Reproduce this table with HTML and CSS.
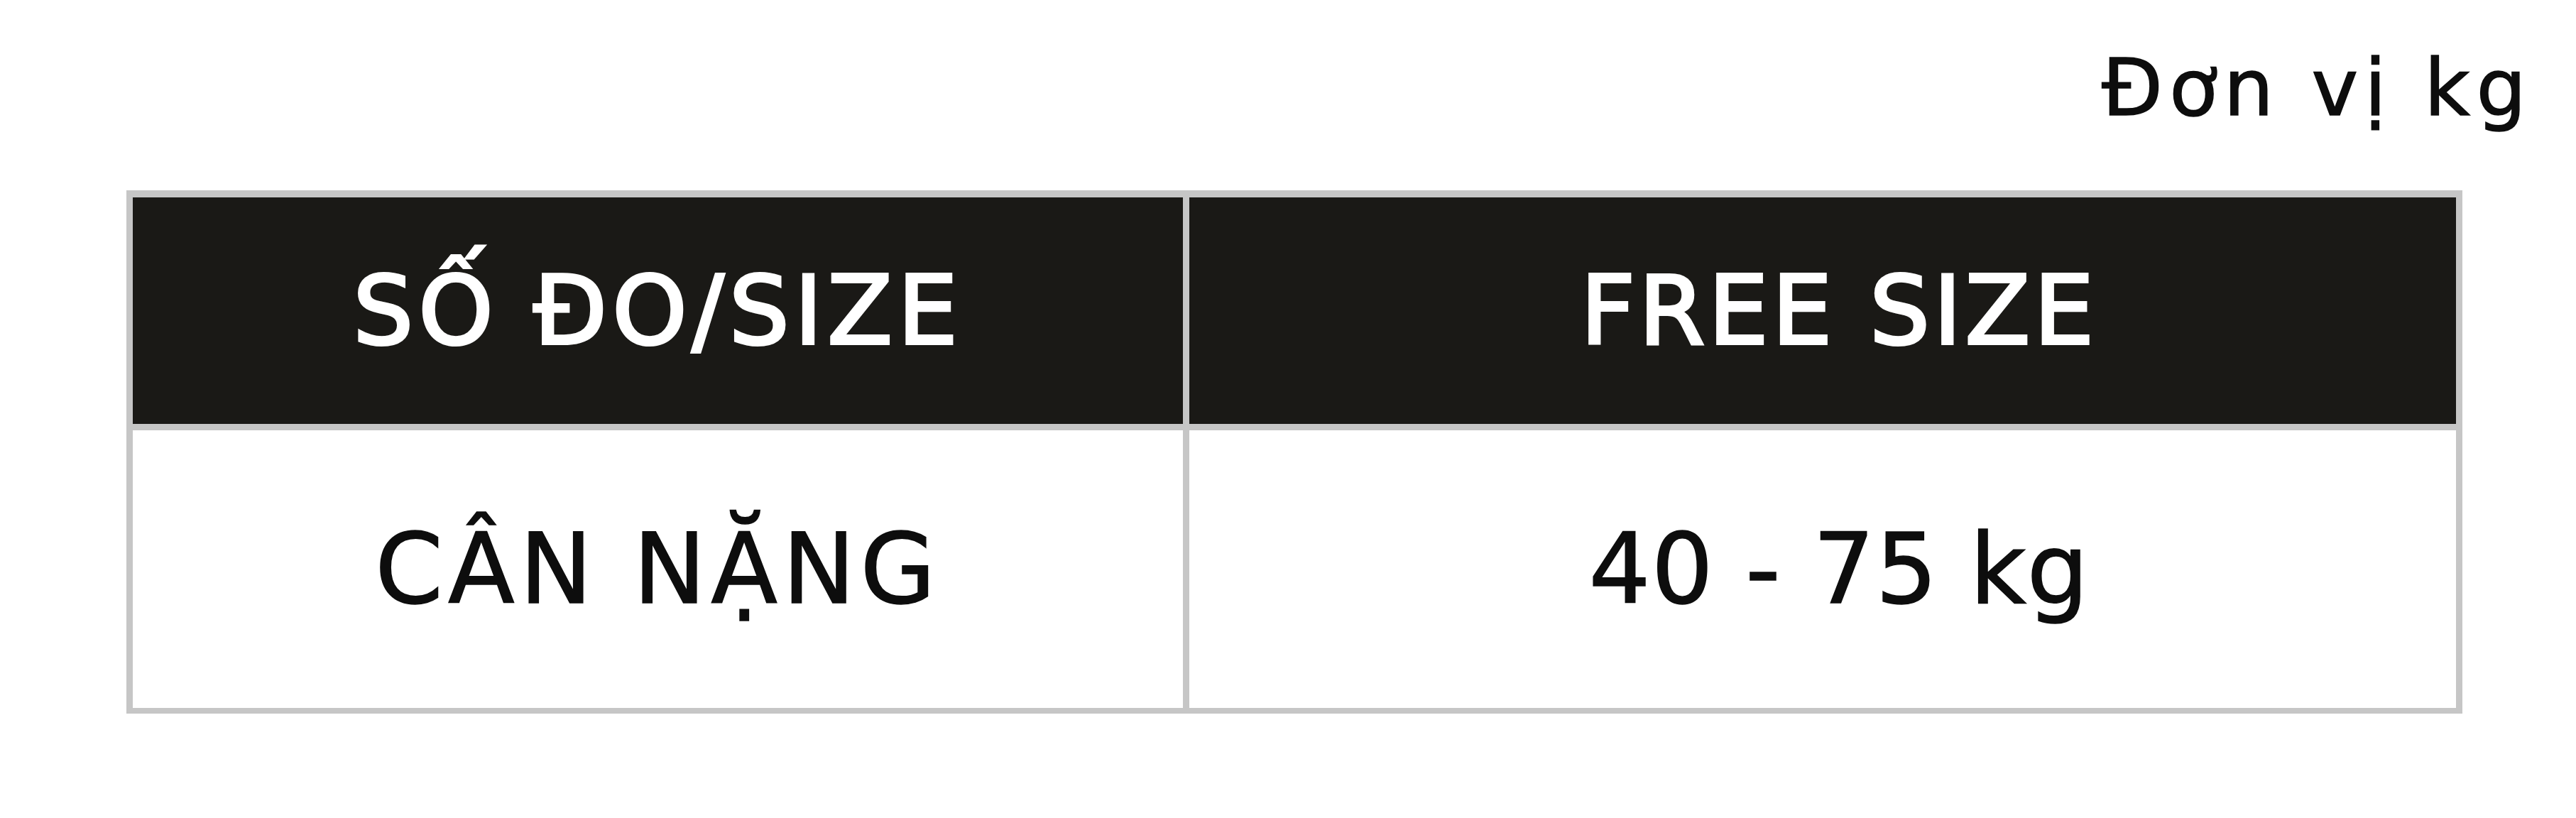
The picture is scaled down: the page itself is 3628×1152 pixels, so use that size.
FILE: index.html
```html
<!DOCTYPE html>
<html lang="vi">
<head>
<meta charset="utf-8">
<title>Bảng size</title>
<link rel="stylesheet" href="styles.css">
</head>
<body>
<main class="page">
  <div class="unit-row"><span class="unit">Đơn vị kg</span></div>
  <div class="size-table">
    <div class="cell head col-a">SỐ ĐO/SIZE</div>
    <div class="cell head col-b">FREE SIZE</div>
    <div class="cell body col-a">CÂN NẶNG</div>
    <div class="cell body col-b value">40 - 75 kg</div>
  </div>
</main>
</body>
</html>
```

FILE: styles.css
```css
html, body {
  margin: 0;
  padding: 0;
  background: #ffffff;
}

.page {
  font-family: "DejaVu Sans", Inter, sans-serif;
  padding: 68px 70px 0 178px;
  color: #0d0d0d;
}

.unit-row {
  display: flex;
  justify-content: flex-end;
}

.unit {
  font-size: 111px;
  line-height: 1;
  font-weight: 400;
  letter-spacing: 9px;
  margin-right: -9px;
  -webkit-text-stroke: 1.5px #0d0d0d;
}

.size-table {
  margin-top: 89px;
  display: grid;
  grid-template-columns: 1479px 1784px;
  grid-template-rows: 319px 391px;
  gap: 9px;
  padding: 10px 9px 8px 9px;
  background: #c6c6c6;
  width: fit-content;
}

.cell {
  display: flex;
  align-items: center;
  justify-content: center;
  line-height: 1;
}

.col-b {
  padding-left: 46px;
}

.head {
  background: #1a1916;
  color: #ffffff;
  font-size: 134px;
  font-weight: 400;
  letter-spacing: 5px;
  -webkit-text-stroke: 4px #ffffff;
}

.head.col-a {
  letter-spacing: 7px;
}

.body {
  background: #ffffff;
  color: #0d0d0d;
  font-size: 137px;
  font-weight: 400;
  letter-spacing: 7px;
  -webkit-text-stroke: 1.5px #0d0d0d;
}

.value {
  letter-spacing: 1px;
}
```
